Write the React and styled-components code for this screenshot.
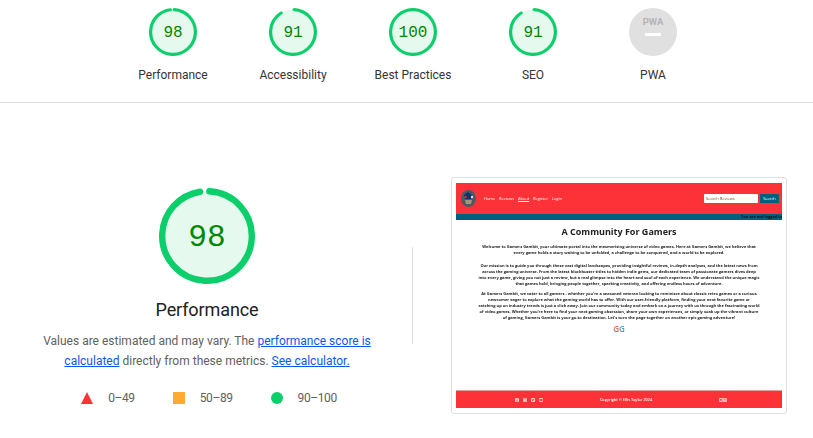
import React from "react";
import styled, { createGlobalStyle } from "styled-components";
import { FaFacebookSquare, FaInstagramSquare, FaTwitterSquare, FaYoutubeSquare, FaEnvelopeSquare, FaGithubSquare } from "react-icons/fa";

const Global = createGlobalStyle`
  html, body { margin: 0; padding: 0; background: #fff; }
  body { font-family: Roboto, "Liberation Sans", sans-serif; width: 813px; height: 438px; overflow: hidden; }
  p { margin: 0; }
`;

const Page = styled.div`
  width: 813px;
  height: 438px;
`;

const ScoreBar = styled.section`
  display: flex;
  justify-content: center;
  height: 94px;
  padding: 8px 0 0 13px;
  border-bottom: 1px solid #e0e0e0;
`;

const ScoreItem = styled.div`
  width: 120px;
  display: flex;
  flex-direction: column;
  align-items: center;
`;

const ScoreLabel = styled.div`
  margin-top: 11px;
  font-size: 12px;
  line-height: 16px;
  color: #333;
`;

const Main = styled.section`
  display: flex;
  align-items: flex-start;
  padding: 74px 0 0 42px;
`;

const Summary = styled.div`
  width: 330px;
  padding-top: 11px;
  display: flex;
  flex-direction: column;
  align-items: center;
`;

const SummaryTitle = styled.h2`
  margin: 13px 0 0;
  font-size: 18px;
  line-height: 26px;
  font-weight: 400;
  letter-spacing: -0.1px;
  color: #212121;
`;

const Description = styled.p`
  margin-top: 8px;
  font-size: 12px;
  line-height: 20px;
  text-align: center;
  color: #616161;
  white-space: nowrap;
`;

const DocLink = styled.a`
  color: #0b57f0;
  text-decoration: underline;
`;

const Legend = styled.ul`
  list-style: none;
  margin: 19px 0 0;
  padding: 0 0 0 4px;
  display: flex;
  gap: 38px;
  font-size: 12px;
  line-height: 16px;
  letter-spacing: -0.4px;
  color: #616161;
`;

const LegendItem = styled.li`
  display: flex;
  align-items: center;
  gap: 15px;
`;

const Divider = styled.div`
  width: 1px;
  height: 97px;
  margin: 70px 38px 0 40px;
  background: #e0e0e0;
`;

const Thumb = styled.div`
  width: 326px;
  height: 225px;
  padding: 5px 4px;
  border: 1px solid #e0e0e0;
  border-radius: 3px;
`;

const Site = styled.div`
  width: 326px;
  height: 225px;
  display: flex;
  flex-direction: column;
  font-family: "Open Sans", sans-serif;
  background: #fff;
  filter: blur(0.3px);
`;

const SiteNav = styled.div`
  height: 31px;
  background: #fd3238;
  display: flex;
  align-items: center;
  padding: 0 3px 0 5px;
  color: #fff;
  font-size: 4px;
`;

const NavLinks = styled.div`
  display: flex;
  gap: 3.8px;
  margin-left: 8px;
`;

const NavLink = styled.span`
  text-decoration: ${(p) => (p.$active ? "underline" : "none")};
`;

const SearchBox = styled.div`
  margin-left: auto;
  width: 52px;
  height: 9px;
  padding-left: 2px;
  background: #fff;
  border-radius: 1px;
  color: #555;
  font-size: 4px;
  line-height: 9px;
`;

const SearchButton = styled.div`
  width: 19px;
  height: 9px;
  margin-left: 2px;
  background: #00607a;
  border-radius: 1px;
  text-align: center;
  font-size: 4px;
  line-height: 9px;
`;

const Band = styled.div`
  height: 6px;
  background: #00607a;
  color: #00141a;
  font-size: 3.9px;
  font-weight: 700;
  line-height: 6px;
  text-align: right;
  white-space: nowrap;
`;

const SiteBody = styled.div`
  flex: 1;
  text-align: center;
  color: #222;
  font-size: 4px;
  line-height: 6.1px;
  font-weight: 700;
  white-space: nowrap;
`;

const SiteHeading = styled.h1`
  margin: 5px 0 6px;
  font-size: 9px;
  line-height: 13px;
  font-weight: 700;
  color: #222;
`;

const SitePara = styled.p`
  margin-bottom: ${(p) => p.$gap}px;
`;

const GG = styled.div`
  margin-top: 4px;
  font-size: 8px;
  line-height: 8px;
  font-weight: 600;
`;

const GLetter = styled.span`
  color: ${(p) => p.$c};
`;

const SiteFooter = styled.div`
  height: 17px;
  background: #fd3238;
  border-top: 1px solid #e0a0a0;
  color: #fff;
  display: flex;
  align-items: center;
  font-size: 3.8px;
  font-weight: 600;
`;

const FooterIcons = styled.div`
  display: flex;
  gap: ${(p) => p.$gap}px;
  margin-left: ${(p) => p.$left}px;
  width: ${(p) => p.$width}px;
`;

const Copyright = styled.span`
  width: 70px;
  text-align: center;
  white-space: nowrap;
`;

const GaugeNumber = styled.text`
  font-family: "Liberation Mono", monospace;
  fill: #008800;
  text-anchor: middle;
`;

function Gauge({ score, size, font }) {
  const frac = score === 100 ? 1 : (score * 0.985) / 100;
  const len = frac * 351.9;
  return (
    <svg width={size} height={size} viewBox="0 0 120 120">
      <circle cx="60" cy="60" r="56" fill="#e5f9ef" />
      <circle
        cx="60"
        cy="60"
        r="56"
        fill="none"
        stroke="#0ccf6b"
        strokeWidth="8"
        strokeLinecap="round"
        strokeDasharray={`${len} 352`}
        transform="rotate(-87 60 60)"
      />
      <GaugeNumber x="60" y={60 + font * 0.33} fontSize={font}>
        {score}
      </GaugeNumber>
    </svg>
  );
}

function PwaGauge() {
  return (
    <svg width="48" height="48" viewBox="0 0 48 48">
      <circle cx="24" cy="24" r="24" fill="#e0e0e0" />
      <text x="24" y="17" textAnchor="middle" fontSize="9.5" fontWeight="700" fill="#b4b4b4" fontFamily="Roboto, sans-serif">
        PWA
      </text>
      <rect x="16" y="25" width="16" height="3" rx="0.5" fill="#fff" />
    </svg>
  );
}

const scores = [
  ["Performance", 98],
  ["Accessibility", 91],
  ["Best Practices", 100],
  ["SEO", 91],
];

export default function App() {
  return (
    <Page>
      <Global />
      <ScoreBar>
        {scores.map(([label, s]) => (
          <ScoreItem key={label}>
            <Gauge score={s} size={48} font={40} />
            <ScoreLabel>{label}</ScoreLabel>
          </ScoreItem>
        ))}
        <ScoreItem>
          <PwaGauge />
          <ScoreLabel>PWA</ScoreLabel>
        </ScoreItem>
      </ScoreBar>
      <Main>
        <Summary>
          <Gauge score={98} size={96} font={39} />
          <SummaryTitle>Performance</SummaryTitle>
          <Description>
            Values are estimated and may vary. The <DocLink>performance score is</DocLink>
            <br />
            <DocLink>calculated</DocLink> directly from these metrics. <DocLink>See calculator.</DocLink>
          </Description>
          <Legend>
            <LegendItem>
              <svg width="12" height="12" viewBox="0 0 12 12"><path d="M6 0 12 12H0Z" fill="#ff3333" /></svg>
              0–49
            </LegendItem>
            <LegendItem>
              <svg width="12" height="12" viewBox="0 0 12 12"><rect width="12" height="12" fill="#ffaa33" /></svg>
              50–89
            </LegendItem>
            <LegendItem>
              <svg width="12" height="12" viewBox="0 0 12 12"><circle cx="6" cy="6" r="6" fill="#0ccf6b" /></svg>
              90–100
            </LegendItem>
          </Legend>
        </Summary>
        <Divider />
        <Thumb>
          <Site>
            <SiteNav>
              <svg width="15" height="17" viewBox="0 0 15 17">
                <ellipse cx="7.5" cy="8.5" rx="7.5" ry="8.5" fill="#4a5a68" />
                <path d="M3 5 7 2l4 3-1 4H4Z" fill="#14306a" />
                <path d="M4 10h7l-1 4H5Z" fill="#a89670" />
                <circle cx="4.5" cy="7" r="1.2" fill="#c33" />
                <circle cx="11" cy="7" r="1.2" fill="#ddd" />
              </svg>
              <NavLinks>
                <NavLink>Home</NavLink>
                <NavLink>Reviews</NavLink>
                <NavLink $active>About</NavLink>
                <NavLink>Register</NavLink>
                <NavLink>Login</NavLink>
              </NavLinks>
              <SearchBox>Search Reviews</SearchBox>
              <SearchButton>Search</SearchButton>
            </SiteNav>
            <Band>You are not logged in</Band>
            <SiteBody>
              <SiteHeading>A Community For Gamers</SiteHeading>
              <SitePara $gap={7}>
                Welcome to Gamers Gambit, your ultimate portal into the mesmerising universe of video games. Here at Gamers Gambit, we believe that
                <br />
                every game holds a story waiting to be unfolded, a challenge to be conquered, and a world to be explored.
              </SitePara>
              <SitePara $gap={3}>
                Our mission is to guide you through these vast digital landscapes, providing insightful reviews, in-depth analyses, and the latest news from
                <br />
                across the gaming universe. From the latest blockbuster titles to hidden indie gems, our dedicated team of passionate gamers dives deep
                <br />
                into every game, giving you not just a review, but a real glimpse into the heart and soul of each experience. We understand the unique magic
                <br />
                that games hold, bringing people together, sparking creativity, and offering endless hours of adventure.
              </SitePara>
              <SitePara $gap={3}>
                At Gamers Gambit, we cater to all gamers - whether you're a seasoned veteran looking to reminisce about classic retro games or a curious
                <br />
                newcomer eager to explore what the gaming world has to offer. With our user-friendly platform, finding your next favorite game or
                <br />
                catching up on industry trends is just a click away. Join our community today and embark on a journey with us through the fascinating world
                <br />
                of video games. Whether you're here to find your next gaming obsession, share your own experiences, or simply soak up the vibrant culture
                <br />
                of gaming, Gamers Gambit is your go-to destination. Let's turn the page together on another epic gaming adventure!
              </SitePara>
              <GG>
                <GLetter $c="#d9645c">G</GLetter>
                <GLetter $c="#4c9db8">G</GLetter>
              </GG>
            </SiteBody>
            <SiteFooter>
              <FooterIcons $gap={4} $left={59} $width={76}>
                <FaFacebookSquare size={4} />
                <FaInstagramSquare size={4} />
                <FaTwitterSquare size={4} />
                <FaYoutubeSquare size={4} />
              </FooterIcons>
              <Copyright>Copyright © Ellis Taylor 2024</Copyright>
              <FooterIcons $gap={0} $left={58} $width={10}>
                <FaEnvelopeSquare size={4} />
                <FaGithubSquare size={4} />
              </FooterIcons>
            </SiteFooter>
          </Site>
        </Thumb>
      </Main>
    </Page>
  );
}
